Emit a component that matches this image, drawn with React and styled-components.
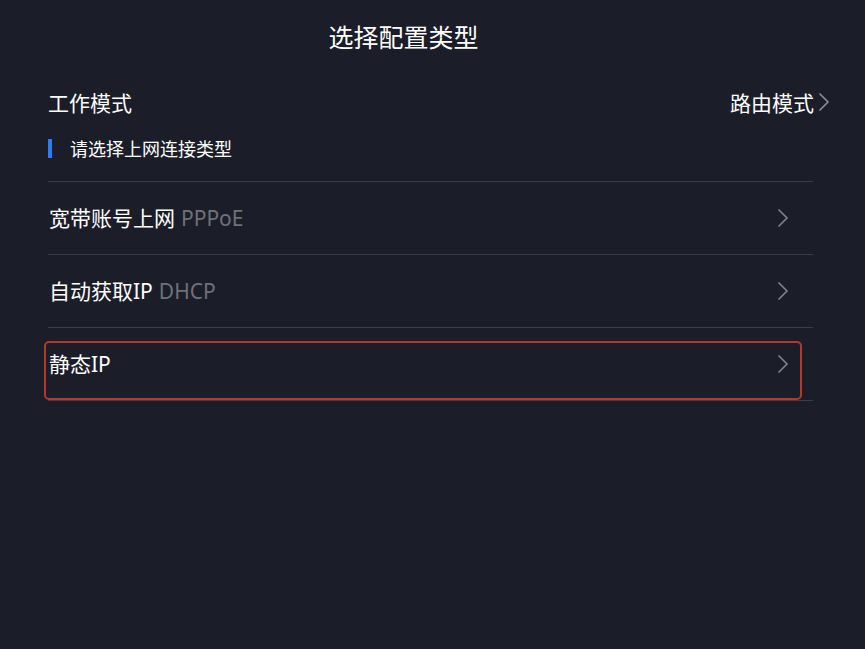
import React from 'react'
import styled, { createGlobalStyle } from 'styled-components'

const GlobalStyle = createGlobalStyle`
  html, body {
    margin: 0;
    padding: 0;
    background: #1b1d29;
  }
  body {
    font-family: "Noto Sans", "Noto Sans CJK SC", sans-serif;
    color: #ffffff;
  }
`

const Page = styled.div`
  width: 865px;
  height: 649px;
  background: #1b1d29;
  box-sizing: border-box;
  padding: 0 52px 0 48px;
`

const Title = styled.h1`
  margin: 0;
  padding: 20px 54px 0 0;
  height: 34px;
  line-height: 34px;
  font-size: 25px;
  font-weight: 400;
  text-align: center;
`

const ModeRow = styled.div`
  display: flex;
  align-items: center;
  justify-content: space-between;
  margin-top: 33px;
  height: 30px;
  font-size: 21px;
`

const ModeValue = styled.div`
  display: flex;
  align-items: center;
  gap: 4px;
  margin-right: -17px;
`

const Hint = styled.div`
  display: flex;
  align-items: center;
  gap: 18px;
  margin-top: 21px;
  height: 20px;
  font-size: 18px;
`

const HintBar = styled.span`
  width: 4px;
  height: 19px;
  background: #2f7bf6;
`

const List = styled.div`
  margin-top: 23px;
  border-top: 1px solid #3a3c47;
`

const Row = styled.div`
  position: relative;
  display: flex;
  align-items: center;
  justify-content: space-between;
  height: 72px;
  padding: 0 24px 0 1px;
  border-bottom: 1px solid #3a3c47;
  font-size: 21px;
`

const Label = styled.span`
  position: relative;
  top: -1px;
`

const Sub = styled.span`
  color: #6f717b;
  margin-left: 6px;
`

const Highlight = styled.div`
  position: absolute;
  left: -4px;
  right: 11px;
  top: 13px;
  bottom: 0px;
  border: 2px solid #b3392d;
  border-radius: 5px;
  pointer-events: none;
`

const Chevron = ({ color = '#80828b', height = 20 }) => (
  <svg width="12" height={height} viewBox="0 0 12 20" fill="none">
    <path d="M1.5 1.5 L10 10 L1.5 18.5" stroke={color} strokeWidth="1.6" />
  </svg>
)

const options = [
  { label: '宽带账号上网', sub: 'PPPoE' },
  { label: '自动获取IP', sub: 'DHCP' },
  { label: '静态IP', selected: true }
]

export default function App() {
  return (
    <>
      <GlobalStyle />
      <Page>
        <Title>选择配置类型</Title>
        <ModeRow>
          <span>工作模式</span>
          <ModeValue>
            路由模式
            <Chevron color="#8c8e96" />
          </ModeValue>
        </ModeRow>
        <Hint>
          <HintBar />
          请选择上网连接类型
        </Hint>
        <List>
          {options.map(o => (
            <Row key={o.label}>
              <Label>
                {o.label}
                {o.sub && <Sub>{o.sub}</Sub>}
              </Label>
              <Chevron />
              {o.selected && <Highlight />}
            </Row>
          ))}
        </List>
      </Page>
    </>
  )
}
